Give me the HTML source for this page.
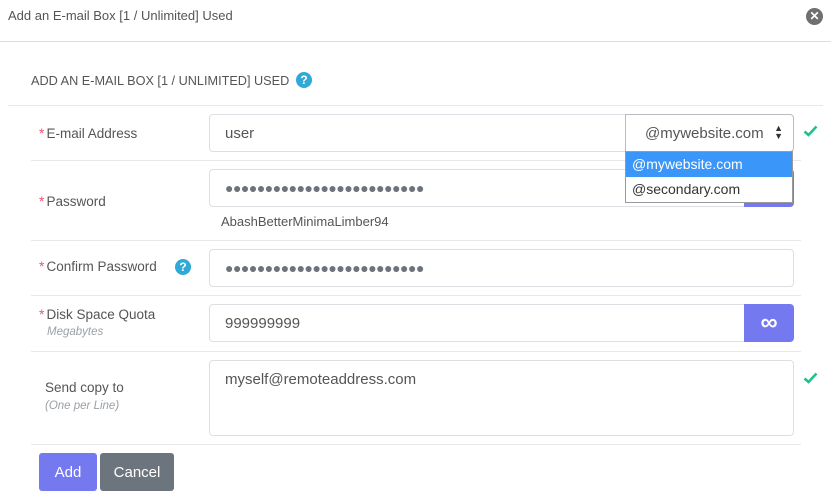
<!DOCTYPE html>
<html><head><meta charset="utf-8"><style>
*{box-sizing:border-box;margin:0;padding:0}
body{width:831px;height:498px;background:#fff;font-family:"Liberation Sans",sans-serif;color:#555;position:relative;overflow:hidden}
.a{position:absolute}
.hl{position:absolute;height:1px;background:#e6e8ea}
.inp{position:absolute;border:1px solid #dcdfe3;border-radius:4px;background:#fff;font-size:15px;color:#555;padding-left:15px;display:flex;align-items:center}
.lbl{position:absolute;font-size:13.5px;color:#555}
.req{color:#f0506e;font-size:14px;margin-right:2px}
.sub{position:absolute;font-size:11.5px;font-style:italic;color:#9aa0a6}
.dots{letter-spacing:-0.5px;font-size:14px;color:#6c737a}
.help{position:absolute;width:16px;height:16px;border-radius:50%;background:#31a9d6;color:#fff;font-size:12px;font-weight:bold;text-align:center;line-height:16px}
.chk{position:absolute}
.btn{position:absolute;border-radius:3px;color:#fff;font-size:15px;display:flex;align-items:center;justify-content:center}
</style></head><body>
<div class="a" style="left:8px;top:8px;font-size:13px;color:#555">Add an E-mail Box [1 / Unlimited] Used</div>
<div class="a" style="left:806px;top:8px;width:17px;height:17px;border-radius:50%;background:#6f6f6f;color:#fff;font-size:12px;font-weight:bold;text-align:center;line-height:17px">✕</div>
<div class="hl" style="left:0;top:41px;width:831px;background:#dedede"></div>

<div class="a" style="left:31px;top:74px;font-size:12.7px;color:#555">ADD AN E-MAIL BOX [1 / UNLIMITED] USED</div>
<div class="help" style="left:296px;top:72px">?</div>
<div class="hl" style="left:8px;top:105px;width:815px"></div>

<div class="lbl" style="left:39px;top:125px"><span class="req">*</span>E-mail Address</div>
<div class="inp" style="left:209px;top:114px;width:420px;height:38px;border-right:none;border-radius:4px 0 0 4px">user</div>
<div class="inp" style="left:625px;top:114px;width:169px;height:38px;border-color:#b8bcc0;border-radius:0 4px 4px 0;padding-left:19px">@mywebsite.com<span style="position:absolute;right:10px;top:9px;font-size:9px;line-height:8px;color:#333">▲<br>▼</span></div>
<svg class="chk" style="left:803px;top:125px" width="15" height="12" viewBox="0 0 15 12"><path d="M1.5 6.5 L5.5 10 L13.5 1.5" fill="none" stroke="#1ec28b" stroke-width="2.6"/></svg>
<div class="hl" style="left:31px;top:160px;width:770px"></div>

<div class="lbl" style="left:39px;top:193px"><span class="req">*</span>Password</div>
<div class="inp dots" style="left:209px;top:169px;width:585px;height:38px">●●●●●●●●●●●●●●●●●●●●●●●●●</div>
<div class="a" style="left:744px;top:169px;width:50px;height:38px;background:#7479f0;border-radius:0 4px 4px 0"></div>
<div class="a" style="left:221px;top:214px;font-size:13px;color:#555">AbashBetterMinimaLimber94</div>
<div class="hl" style="left:31px;top:240px;width:770px"></div>

<div class="a" style="left:625px;top:151px;width:168px;height:52px;border:1px solid #9a9a9a;background:#fff;font-size:14px">
<div style="height:25px;background:#3a97f9;color:#fff;padding-left:6px;line-height:25px">@mywebsite.com</div>
<div style="height:25px;color:#333;padding-left:6px;line-height:25px">@secondary.com</div></div>

<div class="lbl" style="left:39px;top:258px"><span class="req">*</span>Confirm Password</div>
<div class="help" style="left:175px;top:259px">?</div>
<div class="inp dots" style="left:209px;top:249px;width:585px;height:38px">●●●●●●●●●●●●●●●●●●●●●●●●●</div>
<div class="hl" style="left:31px;top:295px;width:770px"></div>

<div class="lbl" style="left:39px;top:306px"><span class="req">*</span>Disk Space Quota</div>
<div class="sub" style="left:47px;top:326px">Megabytes</div>
<div class="inp" style="left:209px;top:304px;width:540px;height:38px;border-radius:4px 0 0 4px">999999999</div>
<div class="btn" style="left:744px;top:304px;width:50px;height:38px;background:#7479f0;border-radius:0 4px 4px 0;font-size:24px;font-weight:bold">∞</div>
<div class="hl" style="left:31px;top:351px;width:770px"></div>

<div class="lbl" style="left:45px;top:380px">Send copy to</div>
<div class="sub" style="left:45px;top:400px">(One per Line)</div>
<div class="inp" style="left:209px;top:360px;width:585px;height:76px;align-items:flex-start;padding-top:10px">myself@remoteaddress.com</div>
<svg class="chk" style="left:803px;top:372px" width="15" height="12" viewBox="0 0 15 12"><path d="M1.5 6.5 L5.5 10 L13.5 1.5" fill="none" stroke="#1ec28b" stroke-width="2.6"/></svg>
<div class="hl" style="left:31px;top:444px;width:770px"></div>

<div class="btn" style="left:39px;top:453px;width:58px;height:38px;background:#7479f0">Add</div>
<div class="btn" style="left:100px;top:453px;width:74px;height:38px;background:#6c757d">Cancel</div>
</body></html>
